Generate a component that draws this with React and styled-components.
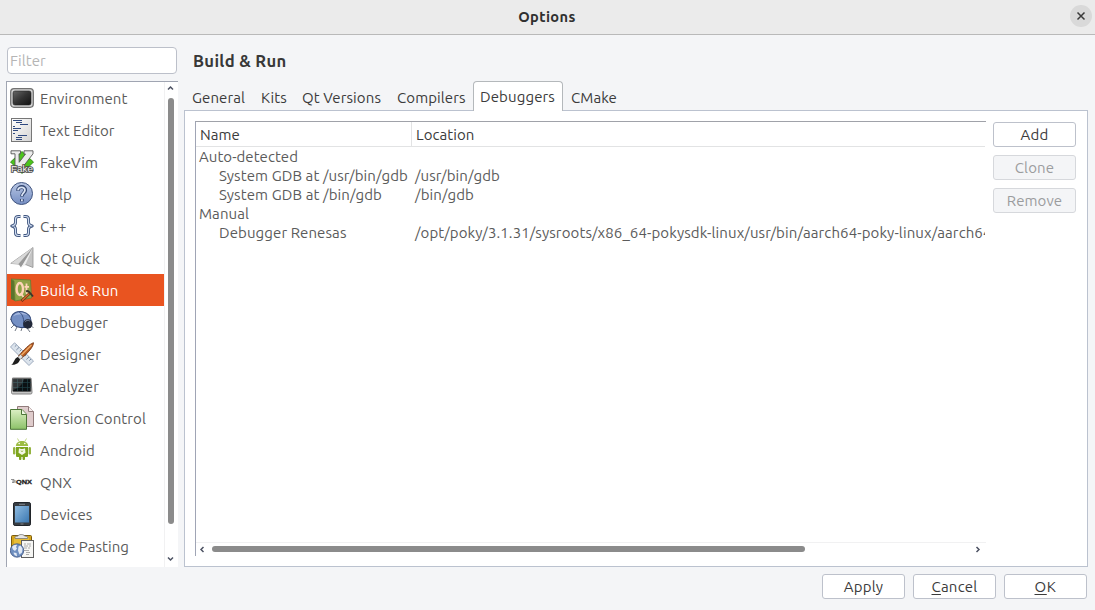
import React, { useLayoutEffect, useRef, useState } from "react";
import styled, { createGlobalStyle, css } from "styled-components";

const Global = createGlobalStyle`
  * { box-sizing: border-box; }
  html, body { margin: 0; padding: 0; }
  body {
    font-family: Ubuntu, "Noto Sans", "Open Sans", sans-serif;
    font-size: 15px;
    color: #3b3b3b;
    background: #f4f5f7;
    overflow: hidden;
  }
`;

const Window = styled.div`
  width: 1095px;
  height: 610px;
  display: flex;
  flex-direction: column;
  background: #f4f5f7;
`;

const TitleBar = styled.header`
  display: grid;
  grid-template-columns: 28px 1fr 28px;
  align-items: center;
  height: 35px;
  flex: none;
  padding-bottom: 2px;
  background: #ebebeb;
  border-bottom: 1px solid #b9b9b9;
`;

const WindowTitle = styled.h1`
  grid-column: 2;
  margin: 0;
  padding: 2px 1px 0 0;
  text-align: center;
  font-size: 14.6px;
  line-height: 20px;
  font-weight: 700;
  color: #303030;
`;

const CloseButton = styled.button`
  width: 22px;
  height: 22px;
  margin: 0 0 0 3px;
  padding: 0;
  border: 0;
  border-radius: 50%;
  background: #d9d9d9;
  display: grid;
  place-items: center;
`;

const Body = styled.main`
  display: flex;
  height: 532px;
  padding: 12px 7px 0 6px;
`;

const Sidebar = styled.aside`
  width: 172px;
  margin-right: 6px;
  display: flex;
  flex-direction: column;
`;

const FilterInput = styled.input`
  width: 170px;
  height: 27px;
  margin: 0 0 7px 1px;
  padding: 0 2px 1px;
  border: 1px solid #bcc0ca;
  border-radius: 4px;
  background: #fff;
  outline: none;
  font: inherit;
  letter-spacing: 0.1px;
  color: #3b3b3b;
  &::placeholder { color: #b5b5b5; opacity: 1; }
`;

const CategoryBox = styled.div`
  display: flex;
  height: 486px;
  border-top: 1px solid #a0a5b2;
  border-left: 1px solid #a0a5b2;
  background: #fff;
`;

const CategoryList = styled.ul`
  width: 157px;
  margin: 0;
  padding: 0;
  list-style: none;
`;

const CategoryItem = styled.li`
  display: flex;
  align-items: center;
  height: 32px;
  padding-left: 3px;
  gap: 6px;
  color: ${(p) => (p.$selected ? "#fff" : "#5b5b5b")};
  background: ${(p) => (p.$selected ? "#e95420" : "transparent")};
  svg { flex: none; }
`;

const VerticalScroll = styled.div`
  display: flex;
  flex-direction: column;
  align-items: center;
  width: 14px;
  padding: 3px 2px 5px 0;
  border-left: 1px solid #f1f1f2;
`;

const VerticalTrack = styled.div`
  flex: 1;
  width: 6px;
  margin-top: 6px;
`;

const VerticalThumb = styled.div`
  height: 426px;
  border-radius: 3px;
  background: #8b8b8b;
`;

const Content = styled.section`
  width: 904px;
  display: flex;
  flex-direction: column;
`;

const PageTitle = styled.h2`
  height: 28px;
  margin: 0;
  padding-left: 9px;
  font-size: 16.6px;
  line-height: 28px;
  font-weight: 700;
  color: #383838;
`;

const TabBar = styled.nav`
  display: flex;
  align-items: flex-end;
  height: 36px;
  margin-bottom: -1px;
  z-index: 1;
`;

const Tab = styled.button`
  width: ${(p) => p.$width}px;
  height: ${(p) => (p.$active ? 30 : 28)}px;
  padding: ${(p) => (p.$active ? "0 0 0 6px" : "1px 0 0 8px")};
  text-align: left;
  font: inherit;
  line-height: 22px;
  color: #3b3b3b;
  border: 0;
  background: transparent;
  white-space: nowrap;
  ${(p) => p.$active && css`
    border: 1px solid #b4b8bb;
    border-bottom: 0;
    border-radius: 4px 4px 0 0;
    background: #fff;
  `}
`;

const Panel = styled.div`
  display: flex;
  gap: 7px;
  height: 457px;
  padding: 10px 11px 10px 10px;
  border: 1px solid #bbc2cf;
  background: #fff;
`;

const Tree = styled.div`
  display: flex;
  flex-direction: column;
  width: 791px;
  height: 435px;
  overflow: hidden;
  border-top: 1px solid #a0a2a9;
  border-left: 1px solid #a0a5b5;
`;

const TreeRow = styled.div`
  display: grid;
  grid-template-columns: 216px 1fr;
  width: 789px;
  height: 19px;
  line-height: 19px;
  color: #5b5b5b;
  white-space: nowrap;
`;

const TreeHeader = styled(TreeRow)`
  height: 25px;
  line-height: 25px;
  color: #3b3b3b;
  border-bottom: 1px solid #e2e3e4;
`;

const HeaderCell = styled.div`
  padding-left: 4px;
  border-right: ${(p) => (p.$divided ? "1px solid #e2e3e4" : "0")};
`;

const Cell = styled.div`
  min-width: 0;
  overflow: hidden;
  padding-left: ${(p) => (p.$nested ? 23 : 3)}px;
`;

const HorizontalScroll = styled.div`
  display: flex;
  align-items: center;
  height: 14px;
  margin-top: auto;
  padding: 0 5px 1px 3px;
  border-top: 1px solid #f1f1f2;
`;

const HorizontalTrack = styled.div`
  flex: 1;
  margin-left: 6px;
`;

const HorizontalThumb = styled.div`
  width: 593px;
  height: 6px;
  border-radius: 3px;
  background: #8b8b8b;
`;

const Actions = styled.div`
  display: flex;
  flex-direction: column;
  gap: 8px;
  padding-top: 1px;
`;

const Button = styled.button`
  width: 83px;
  height: 25px;
  padding: 0;
  border: 1px solid #bdc1cb;
  border-radius: 3px;
  background: #fff;
  font: inherit;
  line-height: 23px;
  color: #3b3b3b;
  &:disabled {
    color: #9b9c9e;
    border-color: #d6d8dc;
    background: #f4f5f7;
  }
  u { text-underline-offset: 2px; text-decoration-thickness: 1px; text-decoration-skip-ink: none; }
`;

const Footer = styled.footer`
  display: flex;
  justify-content: flex-end;
  gap: 8px;
  padding: 7px 8px 0 0;
`;

const Label = styled.span`
  display: inline-block;
  white-space: pre;
`;

/* Spaces the letters so that the label takes the given advance width. */
function Fit({ w, children }) {
  const ref = useRef(null);
  const [spacing, setSpacing] = useState(0);
  useLayoutEffect(() => {
    const el = ref.current;
    setSpacing((w - el.getBoundingClientRect().width) / el.textContent.length);
  }, [w]);
  return <Label ref={ref} style={{ letterSpacing: spacing }}>{children}</Label>;
}

const Icon = ({ children }) => (
  <svg width="24" height="24" viewBox="0 0 24 24" fill="none">{children}</svg>
);

const Defs = () => (
  <svg width="0" height="0" style={{ display: "block" }}>
    <defs>
      <linearGradient id="dark" x1="0" y1="0" x2="1" y2="1">
        <stop offset="0" stopColor="#666" /><stop offset=".5" stopColor="#333" /><stop offset="1" stopColor="#111" />
      </linearGradient>
      <linearGradient id="blue" x1="0" y1="0" x2="0" y2="1">
        <stop offset="0" stopColor="#b9c7e4" /><stop offset="1" stopColor="#748dc2" />
      </linearGradient>
      <linearGradient id="paper" x1="0" y1="0" x2="1" y2="1">
        <stop offset="0" stopColor="#fff" /><stop offset="1" stopColor="#d4d4d4" />
      </linearGradient>
      <linearGradient id="green" x1="0" y1="0" x2="0" y2="1">
        <stop offset="0" stopColor="#dcefc4" /><stop offset="1" stopColor="#8cc268" />
      </linearGradient>
      <linearGradient id="screen" x1="0" y1="0" x2="1" y2="1">
        <stop offset="0" stopColor="#8fbbe0" /><stop offset="1" stopColor="#3b78b2" />
      </linearGradient>
    </defs>
  </svg>
);

const icons = {
  environment: (
    <Icon>
      <rect x=".7" y="2.7" width="22.6" height="18.6" rx="3.2" fill="#d2d2d2" stroke="#727272" strokeWidth="1.3" />
      <rect x="3" y="5" width="18" height="14" rx="2" fill="url(#dark)" stroke="#222" strokeWidth=".6" />
    </Icon>
  ),
  text: (
    <Icon>
      <rect x="1.5" y=".5" width="20" height="23" fill="url(#paper)" stroke="#777" />
      <path d="M3 2.5h9M6 4.5h6M10 6.5h8M3 8.5h2M3 10.5h8M3 12.5h5M3 15.5h2M8 17.5h9M6 19.5h6M6 21.5h6" stroke="#2f4a80" />
    </Icon>
  ),
  vim: (
    <Icon>
      <path d="M12 1.500l11.500 10.500L12 23.500.5 12z" fill="#4cc31c" stroke="#247a0c" strokeWidth=".8" />
      <path d="M1 .8h9.500v3H9l.2 8.500L15.500 4H14V.8h9v3L10.500 20H5V3.800H1z" fill="#ececec" stroke="#555" strokeWidth=".9" />
      <text x="1" y="22" fontFamily="Liberation Sans, sans-serif" fontSize="9" textLength="22" lengthAdjust="spacingAndGlyphs" fill="#f4f4f4" stroke="#4a4a4a" strokeWidth="1.700" paintOrder="stroke">Fake</text>
    </Icon>
  ),
  help: (
    <Icon>
      <circle cx="11.5" cy="11.5" r="11" fill="url(#blue)" stroke="#41557f" />
      <path d="M8 8.7C8 3.6 15.7 4 15.2 8.5c-.3 2.5-3.3 2.8-3.3 6M11.9 17v2.5" stroke="#344872" strokeWidth="3.8" />
      <path d="M8 8.3C8.3 4.4 15.4 4.6 14.9 8.3c-.3 2.4-3 2.9-3 5.7M11.9 17.3v1.9" stroke="#dbe4f4" strokeWidth="1.8" />
    </Icon>
  ),
  cpp: (
    <Icon>
      <g stroke="#41567f" strokeWidth="3" strokeLinejoin="round">
        <path d="M10.500 2.500H8.500c-2.300 0-3 1-3 2.800v3.300c0 2-1 3-3.700 3.400 2.700.4 3.700 1.500 3.700 3.400v3.300c0 1.800.8 2.800 3 2.800h2M13.500 2.500H15.500c2.300 0 3 1 3 2.800v3.300c0 2 1 3 3.700 3.400-2.700.4-3.700 1.500-3.700 3.400v3.300c0 1.800-.8 2.800-3 2.800h-2" />
      </g>
      <g stroke="#cfdcf0" strokeWidth="1.2">
        <path d="M10.500 2.500H8.500c-2.300 0-3 1-3 2.800v3.300c0 2-1 3-3.700 3.400 2.700.4 3.700 1.500 3.700 3.400v3.300c0 1.800.8 2.800 3 2.800h2M13.500 2.500H15.500c2.300 0 3 1 3 2.800v3.300c0 2 1 3 3.700 3.400-2.700.4-3.700 1.500-3.700 3.400v3.300c0 1.800-.8 2.800-3 2.800h-2" />
      </g>
    </Icon>
  ),
  quick: (
    <Icon>
      <path d="M.8 17.4L23 1.5v20l-7-2.8z" fill="#c4c4c4" stroke="#929292" strokeWidth=".8" />
      <path d="M1 17.4L23 1.5 8.5 18z" fill="#d8d8d8" />
      <path d="M8.5 18L23 1.5 11 21.500z" fill="#979797" />
      <path d="M11 21.500L23 1.5 15.2 19z" fill="#eee" />
    </Icon>
  ),
  build: (
    <Icon>
      <path d="M1 1l4 2v20l-4-2z" fill="#5a742d" />
      <path d="M1 1l19.5 1L21.5 20 5 23 4 3z" fill="#8fa347" stroke="#687b32" strokeWidth=".8" />
      <ellipse cx="9.800" cy="11" rx="3.200" ry="6" stroke="#ffd4b8" strokeWidth="2.400" />
      <path d="M10.500 15l3 4M16.500 5.500v9c0 1.400.8 1.900 2 1.400M14.500 8.800h4.500" stroke="#ffd4b8" strokeWidth="1.800" />
      <path d="M11.500 23L19.500 15.500" stroke="#6b2e13" strokeWidth="2.500" />
      <path d="M12 22.500L19.200 15.800" stroke="#d66f2d" strokeWidth="1.300" />
      <path d="M16 13.300c1.600-.6 2.800 0 3.700 1.200l3.300 4" stroke="#3a342c" strokeWidth="1.900" />
    </Icon>
  ),
  bug: (
    <Icon>
      <path d="M4 15l-3 3M7 17l-2 4M12 18l-1 3M21.500 16l2 2M17 18l3 4M1.500 10L0 9" stroke="#606875" strokeWidth=".9" />
      <ellipse cx="11" cy="9.500" rx="10" ry="8" transform="rotate(12 11 9.500)" fill="#7590c4" stroke="#33497a" />
      <path d="M3 6.500C6 1.800 13 1 17.500 5 11 3.500 6 4.500 3 6.500z" fill="#a9bbe0" />
      <path d="M9 1.800c4 2.500 5.500 8 4.500 15.500" stroke="#3d5486" />
      <circle cx="17.800" cy="14" r="4.700" fill="#22293a" />
      <path d="M14.800 12c1.200-1.800 3.500-2 5-1" stroke="#73809b" />
    </Icon>
  ),
  designer: (
    <Icon>
      <path d="M4.5.8L23.5 19l-4.5 4.5L.5 5z" fill="#dbe3ec" stroke="#9daabd" />
      <path d="M6.5 3L4.8 4.7M9 5.4L6.3 8M11.4 7.6L9.7 9.3M16.5 12.5l-1.7 1.7M19 15l-2.6 2.5M21 17l-1.7 1.7" stroke="#71839b" strokeWidth=".9" />
      <path d="M23.5.7c.2 3.8-5.7 10.5-12.3 15.8L8.5 14C13.7 8 19.3 2 23.5.7z" fill="#b65b22" stroke="#71300d" strokeWidth=".8" />
      <path d="M21.5 3L11 13.5" stroke="#efab68" strokeWidth="1.4" />
      <path d="M10.5 12.4l2.4 2.6-3 2.5-2-2.2z" fill="#e0e0e0" stroke="#666" strokeWidth=".5" />
      <path d="M7.8 15.1l2.3 2.5C8.5 22 5.5 23 1.2 23c2.8-1.6 2.8-6.5 6.6-7.9z" fill="#1d1d1d" />
    </Icon>
  ),
  analyzer: (
    <Icon>
      <path d="M2.500 4h18.500l1 14.500c0 1-.5 1.500-1.400 1.500H2.900c-.9 0-1.400-.5-1.400-1.500z" fill="#ccc" stroke="#666" strokeWidth=".8" />
      <rect x="2.800" y="4.800" width="18" height="12.800" rx=".8" fill="#0b1013" stroke="#4d4d4d" strokeWidth=".6" />
      <path d="M7.500 5v12M12.500 5v12M17.500 5v12M3 8.500h18M3 13.500h18" stroke="#1f4146" strokeWidth=".7" />
      <path d="M3 5h11C13 10 9 14 3 16z" fill="#fff" opacity=".15" />
    </Icon>
  ),
  version: (
    <Icon>
      <path d="M7.5.5h11l5 5v15h-16z" fill="#dfcccc" stroke="#927c7c" />
      <path d="M18.5.5v5h5" fill="#f7eded" stroke="#927c7c" />
      <path d="M.5 3.5H12l4.5 4.8v15H.5z" fill="url(#green)" stroke="#4c7637" />
      <path d="M11.5 3.5v5h5" fill="#f1f9e6" stroke="#4c7637" />
    </Icon>
  ),
  android: (
    <Icon>
      <path d="M7.500 .5l1.700 3M16.500 .5l-1.700 3" stroke="#c5d88a" />
      <path d="M5.800 8c.3-6.800 12.100-6.800 12.400 0z" fill="#9dbd43" />
      <path d="M6 9h12V17.500c0 1-.5 1.600-1.500 1.600H15v1.900c0 1.300-2.400 1.300-2.400 0v-1.900h-1.200v1.900c0 1.300-2.400 1.300-2.400 0v-1.900H7.500C6.500 19.100 6 18.500 6 17.500z" fill="#7da51e" />
      <rect x="3" y="9" width="2.400" height="7.500" rx="1.200" fill="#94b340" />
      <rect x="18.600" y="9" width="2.400" height="7.500" rx="1.200" fill="#94b340" />
      <circle cx="9.200" cy="5.500" r=".8" fill="#fff" /><circle cx="14.800" cy="5.500" r=".8" fill="#fff" />
      <path d="M9 10.200l2 .8h2l2-.8.500 4.500-3.500 2.300-3.500-2.300z" fill="#f3f7e5" />
      <path d="M10.800 12.800l1.200.8 1.200-.8" stroke="#8caf36" strokeWidth=".8" />
    </Icon>
  ),
  qnx: (
    <Icon>
      <path d="M1 9.500h3v3H2M2 11h2M5 10v3" stroke="#777" strokeWidth=".8" />
      <text x="6" y="14" fontFamily="Liberation Sans, sans-serif" fontSize="6" fontWeight="700" textLength="16" lengthAdjust="spacingAndGlyphs" fill="#222" stroke="#222" strokeWidth=".3">QNX</text>
    </Icon>
  ),
  devices: (
    <Icon>
      <rect x="3.500" y=".5" width="17" height="23" rx="1.600" fill="#373d43" stroke="#202429" />
      <rect x="5" y="4" width="14" height="16.500" fill="url(#screen)" />
      <path d="M9 2.300h6M10.500 22h3" stroke="#93989e" strokeWidth=".8" />
    </Icon>
  ),
  paste: (
    <Icon>
      <rect x="1.500" y="1.500" width="20" height="18" rx="1" fill="#d5a51c" stroke="#7b5c0e" />
      <path d="M4 4h15v12H4z" fill="#e8bd36" />
      <path d="M5 3.500c0-1 1-1.300 3-1.500.5-2 6-2 6.500 0 2 .2 3 .5 3 1.500v1H5z" fill="#e5e5e5" stroke="#777" strokeWidth=".8" />
      <rect x="11.500" y="6.500" width="12" height="17" fill="#f6f6f4" stroke="#5f5f5f" />
      <path d="M14 10h2m1 0h4M14 12h4m1 0h2M14 14h3m1 0h2M14 16.500h5M16 18.500h4M16 20.500h3" stroke="#999" strokeWidth=".8" />
      <circle cx="7" cy="16.500" r="6.700" fill="#6f8fc0" stroke="#3c5381" strokeWidth=".8" />
      <path d="M2 13c1-2 4-2.500 5-2l-1 2 1 1.500-2 2.500-2-1.500zM8.500 12.500l2-1 2 3-.5 4-2.500 2-1.500-4zM3.500 18.500l3 .5.5 3.200c-2-.2-3-1.500-3.500-3.700z" fill="#e3eaf5" />
    </Icon>
  ),
};

const categories = [
  ["environment", "Environment", 87.5],
  ["text", "Text Editor", 74.5],
  ["vim", "FakeVim", 58],
  ["help", "Help", 32],
  ["cpp", "C++", 26.5],
  ["quick", "Qt Quick", 60],
  ["build", "Build & Run", 78.5],
  ["bug", "Debugger", 68],
  ["designer", "Designer", 61],
  ["analyzer", "Analyzer", 59],
  ["version", "Version Control", 106],
  ["android", "Android", 55],
  ["qnx", "QNX", 32],
  ["devices", "Devices", 52.5],
  ["paste", "Code Pasting", 89],
];

const tabs = [
  ["General", 69, 53],
  ["Kits", 41, 26],
  ["Qt Versions", 95, 79],
  ["Compilers", 84, 68.5],
  ["Debuggers", 90, 75],
  ["CMake", 60, 46],
];

const rows = [
  { name: "Auto-detected", w: 99 },
  { name: "System GDB at /usr/bin/gdb", w: 189, path: "/usr/bin/gdb", pw: 85, nested: true },
  { name: "System GDB at /bin/gdb", w: 163, path: "/bin/gdb", pw: 59, nested: true },
  { name: "Manual", w: 50 },
  {
    name: "Debugger Renesas", w: 127.5, nested: true,
    path: "/opt/poky/3.1.31/sysroots/x86_64-pokysdk-linux/usr/bin/aarch64-poky-linux/aarch64", pw: 576.5,
  },
];

const chevrons = {
  up: "M1 4.500L3.500 2 6 4.500",
  down: "M1 2.500L3.500 5 6 2.500",
  left: "M4.500 1L2 3.500 4.500 6",
  right: "M2.500 1L5 3.500 2.500 6",
};

const Chevron = ({ dir }) => (
  <svg width="7" height="7" viewBox="0 0 7 7" fill="none">
    <path d={chevrons[dir]} stroke="#4d5263" strokeWidth="1.5" />
  </svg>
);

export default function App() {
  return (
    <Window>
      <Global />
      <Defs />
      <TitleBar>
        <WindowTitle><Fit w={57.5}>Options</Fit></WindowTitle>
        <CloseButton aria-label="Close">
          <svg width="10" height="10" viewBox="0 0 10 10">
            <path d="M1.500 1.500l7 7M8.500 1.500l-7 7" stroke="#3a3a3a" strokeWidth="1.500" />
          </svg>
        </CloseButton>
      </TitleBar>
      <Body>
        <Sidebar>
          <FilterInput placeholder="Filter" />
          <CategoryBox>
            <CategoryList>
              {categories.map(([icon, name, w]) => (
                <CategoryItem key={name} $selected={icon === "build"}>
                  {icons[icon]}
                  <Fit w={w}>{name}</Fit>
                </CategoryItem>
              ))}
            </CategoryList>
            <VerticalScroll>
              <Chevron dir="up" />
              <VerticalTrack><VerticalThumb /></VerticalTrack>
              <Chevron dir="down" />
            </VerticalScroll>
          </CategoryBox>
        </Sidebar>
        <Content>
          <PageTitle><Fit w={93.5}>Build & Run</Fit></PageTitle>
          <TabBar>
            {tabs.map(([name, width, w]) => (
              <Tab key={name} $width={width} $active={name === "Debuggers"}>
                <Fit w={w}>{name}</Fit>
              </Tab>
            ))}
          </TabBar>
          <Panel>
            <Tree>
              <TreeHeader>
                <HeaderCell $divided><Fit w={40}>Name</Fit></HeaderCell>
                <HeaderCell><Fit w={58.5}>Location</Fit></HeaderCell>
              </TreeHeader>
              {rows.map((r) => (
                <TreeRow key={r.name}>
                  <Cell $nested={r.nested}><Fit w={r.w}>{r.name}</Fit></Cell>
                  <Cell>{r.path && <Fit w={r.pw}>{r.path}</Fit>}</Cell>
                </TreeRow>
              ))}
              <HorizontalScroll>
                <Chevron dir="left" />
                <HorizontalTrack><HorizontalThumb /></HorizontalTrack>
                <Chevron dir="right" />
              </HorizontalScroll>
            </Tree>
            <Actions>
              <Button><Fit w={28}>Add</Fit></Button>
              <Button disabled><Fit w={39.5}>Clone</Fit></Button>
              <Button disabled><Fit w={55.5}>Remove</Fit></Button>
            </Actions>
          </Panel>
        </Content>
      </Body>
      <Footer>
        <Button><Fit w={39.5}>Apply</Fit></Button>
        <Button><Fit w={46}><u>C</u>ancel</Fit></Button>
        <Button><Fit w={22}><u>O</u>K</Fit></Button>
      </Footer>
    </Window>
  );
}
